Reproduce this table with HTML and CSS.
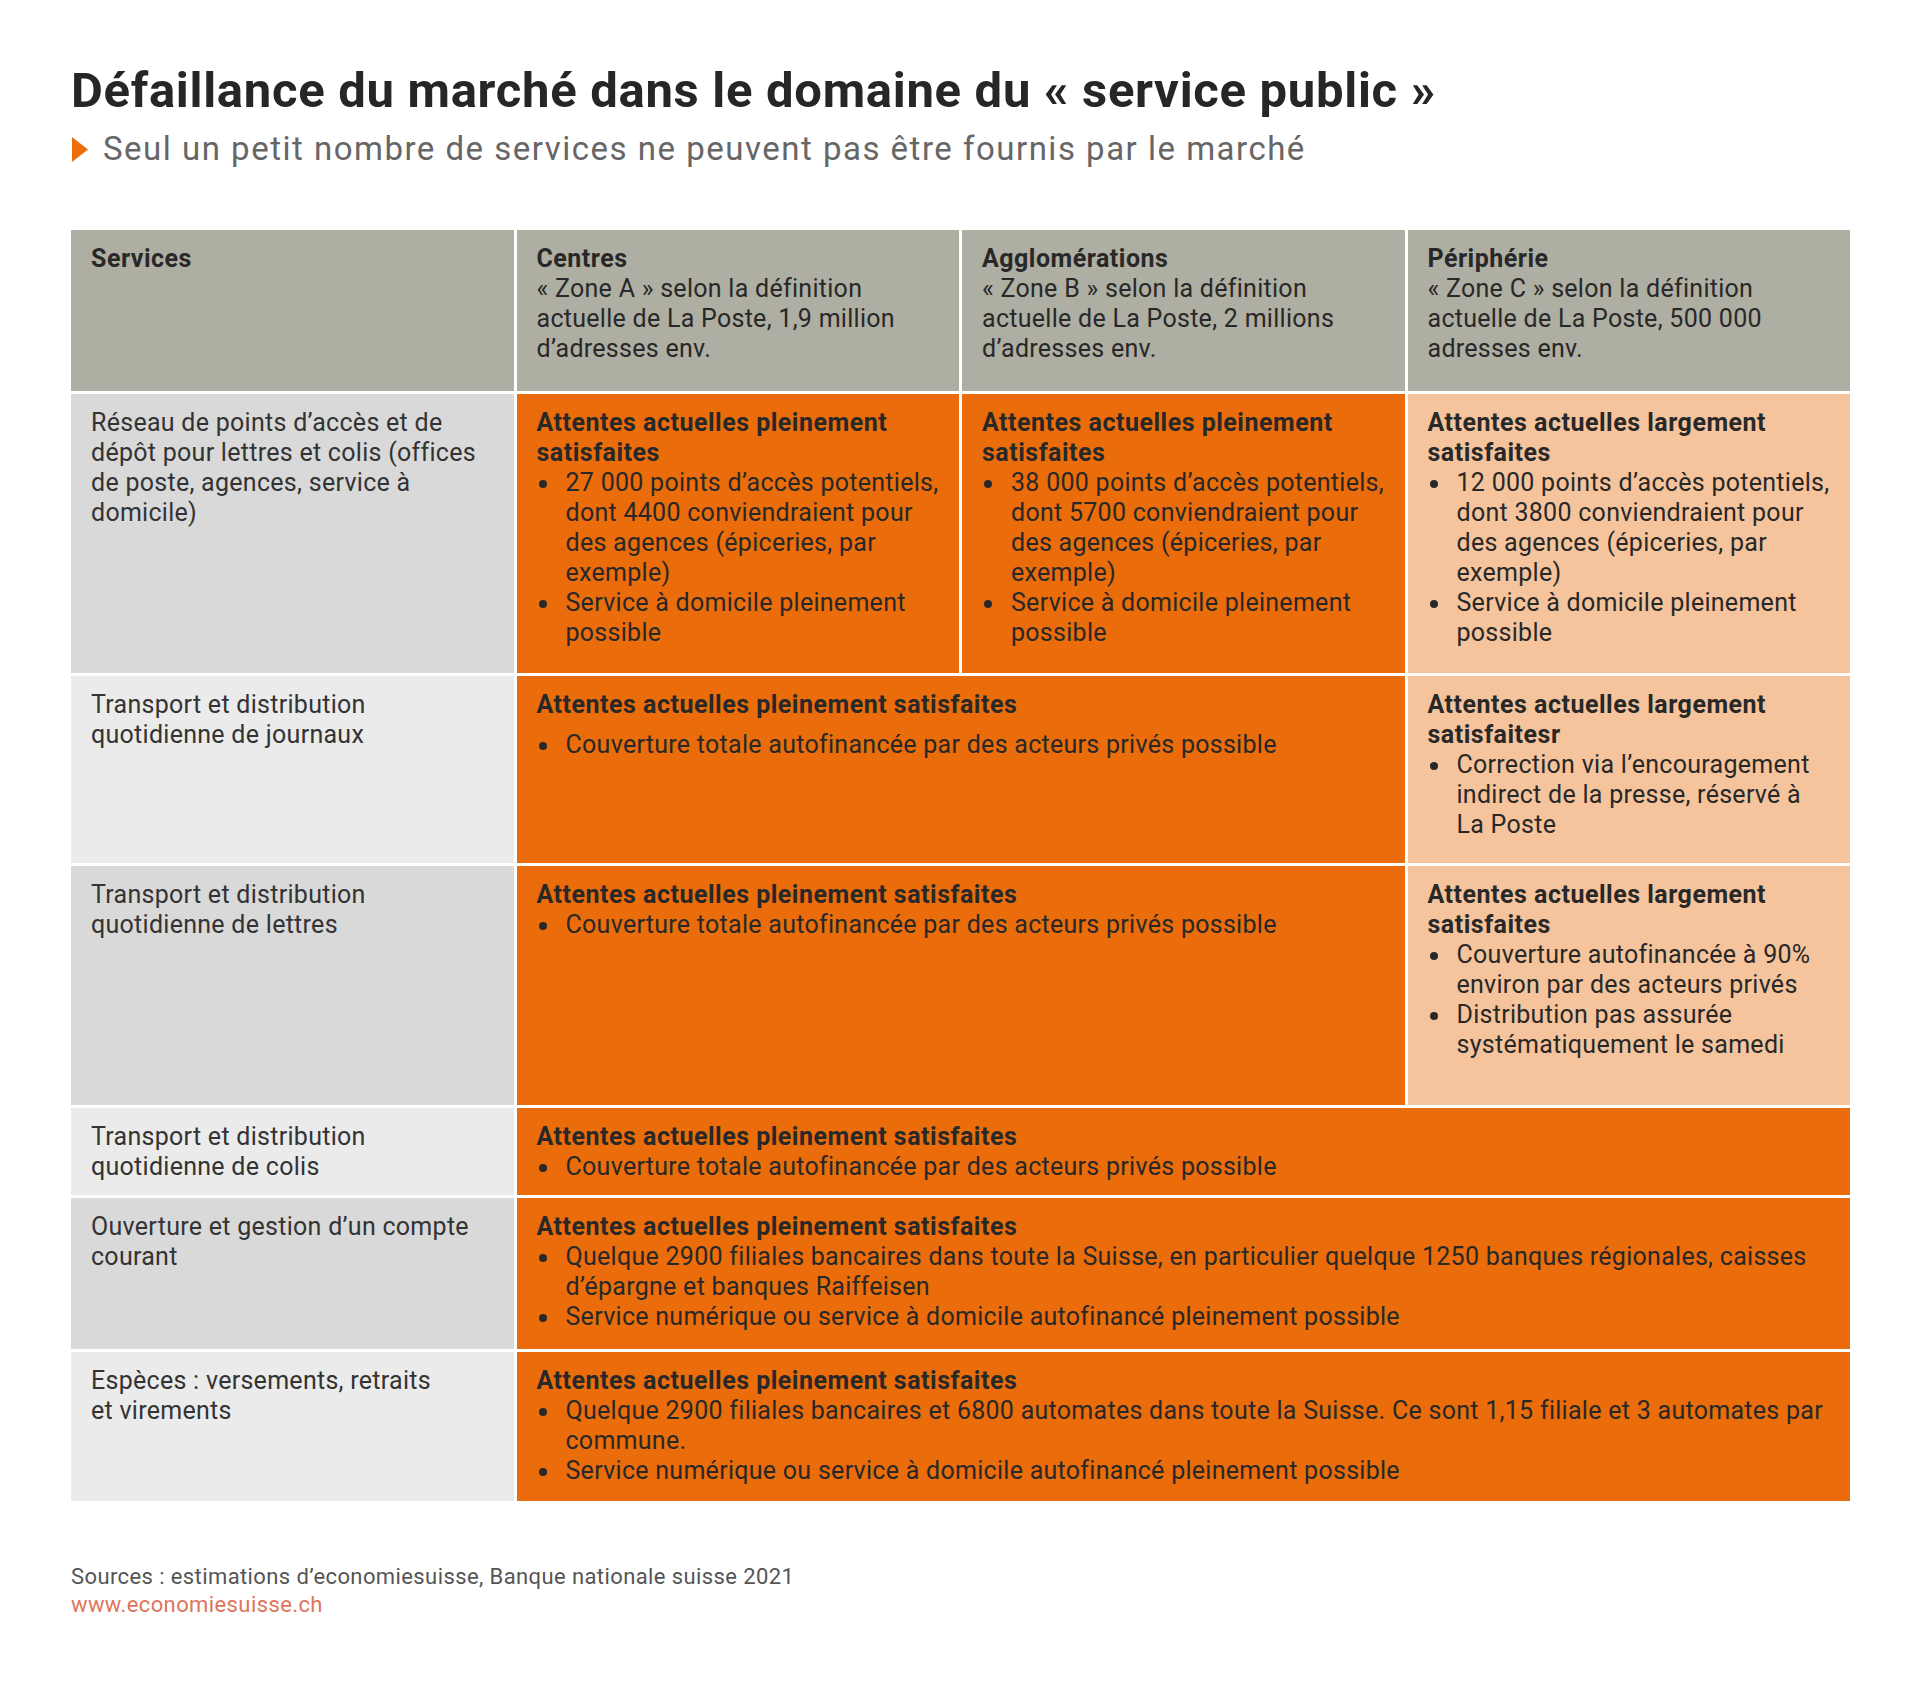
FILE: index.html
```html
<!DOCTYPE html>
<html lang="fr">
<head>
<meta charset="utf-8">
<title>Défaillance du marché dans le domaine du « service public »</title>
<link rel="stylesheet" href="styles.css">
</head>
<body>
<main class="page">
  <h1 class="title">Défaillance du marché dans le domaine du « service public »</h1>
  <p class="subtitle"><svg class="tri" width="16" height="25" viewBox="0 0 16 25"><polygon points="0,0 16,12.5 0,25" fill="#ec6d0b"/></svg><span>Seul un petit nombre de services ne peuvent pas être fournis par le marché</span></p>

  <section class="table">
    <div class="cell head"><b>Services</b></div>
    <div class="cell head"><b>Centres</b><br>« Zone A » selon la définition actuelle de La Poste, 1,9 million d’adresses env.</div>
    <div class="cell head"><b>Agglomérations</b><br>« Zone B » selon la définition actuelle de La Poste, 2 millions d’adresses env.</div>
    <div class="cell head"><b>Périphérie</b><br>« Zone C » selon la définition actuelle de La Poste, 500 000 adresses env.</div>

    <div class="cell svc dark">Réseau de points d’accès et de dépôt pour lettres et colis (offices de poste, agences, service à domicile)</div>
    <div class="cell full">
      <div class="lead">Attentes actuelles pleinement satisfaites</div>
      <ul><li>27 000 points d’accès potentiels, dont 4400 conviendraient pour des agences (épiceries, par exemple)</li><li>Service à domicile pleinement possible</li></ul>
    </div>
    <div class="cell full">
      <div class="lead">Attentes actuelles pleinement satisfaites</div>
      <ul><li>38 000 points d’accès potentiels, dont 5700 conviendraient pour des agences (épiceries, par exemple)</li><li>Service à domicile pleinement possible</li></ul>
    </div>
    <div class="cell part">
      <div class="lead">Attentes actuelles largement satisfaites</div>
      <ul><li>12 000 points d’accès potentiels, dont 3800 conviendraient pour des agences (épiceries, par exemple)</li><li>Service à domicile pleinement possible</li></ul>
    </div>

    <div class="cell svc light">Transport et distribution quotidienne de journaux</div>
    <div class="cell full span2">
      <div class="lead">Attentes actuelles pleinement satisfaites</div>
      <ul class="spaced"><li>Couverture totale autofinancée par des acteurs privés possible</li></ul>
    </div>
    <div class="cell part">
      <div class="lead">Attentes actuelles largement satisfaitesr</div>
      <ul><li>Correction via l’encouragement indirect de la presse, réservé à La Poste</li></ul>
    </div>

    <div class="cell svc dark">Transport et distribution quotidienne de lettres</div>
    <div class="cell full span2">
      <div class="lead">Attentes actuelles pleinement satisfaites</div>
      <ul><li>Couverture totale autofinancée par des acteurs privés possible</li></ul>
    </div>
    <div class="cell part">
      <div class="lead">Attentes actuelles largement satisfaites</div>
      <ul><li>Couverture autofinancée à 90% environ par des acteurs privés</li><li>Distribution pas assurée systématiquement le samedi</li></ul>
    </div>

    <div class="cell svc light">Transport et distribution quotidienne de colis</div>
    <div class="cell full span3">
      <div class="lead">Attentes actuelles pleinement satisfaites</div>
      <ul><li>Couverture totale autofinancée par des acteurs privés possible</li></ul>
    </div>

    <div class="cell svc dark">Ouverture et gestion d’un compte courant</div>
    <div class="cell full span3">
      <div class="lead">Attentes actuelles pleinement satisfaites</div>
      <ul><li>Quelque 2900 filiales bancaires dans toute la Suisse, en particulier quelque 1250 banques régionales, caisses d’épargne et banques Raiffeisen</li><li>Service numérique ou service à domicile autofinancé pleinement possible</li></ul>
    </div>

    <div class="cell svc light">Espèces : versements, retraits<br>et virements</div>
    <div class="cell full span3">
      <div class="lead">Attentes actuelles pleinement satisfaites</div>
      <ul><li>Quelque 2900 filiales bancaires et 6800 automates dans toute la Suisse. Ce sont 1,15 filiale et 3 automates par commune.</li><li>Service numérique ou service à domicile autofinancé pleinement possible</li></ul>
    </div>
  </section>

  <footer class="foot">
    <p>Sources : estimations d’economiesuisse, Banque nationale suisse 2021</p>
    <p class="link">www.economiesuisse.ch</p>
  </footer>
</main>
</body>
</html>
```

FILE: styles.css
```css
html, body {
  margin: 0;
  padding: 0;
  background: #ffffff;
}

body {
  font-family: Roboto, "Liberation Sans", sans-serif;
  color: #282828;
}

.page {
  padding: 61px 70px 40px 71px;
}

.title {
  margin: 0;
  font-size: 49px;
  line-height: 59px;
  font-weight: 700;
  color: #262626;
  letter-spacing: 0.7px;
}

.subtitle {
  margin: 9px 0 0 1px;
  display: flex;
  align-items: center;
  gap: 15px;
  font-size: 33px;
  line-height: 40px;
  color: #666666;
  letter-spacing: 1.5px;
}

.tri {
  flex: 0 0 auto;
  margin-top: 1px;
}

.table {
  margin-top: 61px;
  width: 1779px;
  display: grid;
  grid-template-columns: repeat(4, 1fr);
  grid-template-rows: 161px 279px 187px 239px 87px 151px 149px;
  gap: 3px;
  font-size: 25px;
  line-height: 30px;
  letter-spacing: 0.28px;
}

.cell {
  padding: 14px 16px 10px 20px;
  box-sizing: border-box;
}

.cell b,
.lead {
  font-weight: 700;
  letter-spacing: 0.5px;
}

.head {
  background: #aeaea2;
  color: #282828;
}

.svc {
  color: #333333;
}

.svc.dark {
  background: #d9d9d9;
}

.svc.light {
  background: #ebebeb;
}

.full {
  background: #ea6c0a;
}

.part {
  background: #f5c49c;
}

.span2 {
  grid-column: span 2;
}

.span3 {
  grid-column: span 3;
}

ul {
  list-style: none;
  margin: 0;
  padding: 0;
}

ul.spaced {
  margin-top: 10px;
}

li {
  display: flex;
}

li::before {
  content: "";
  flex: 0 0 auto;
  width: 8px;
  height: 8px;
  border-radius: 50%;
  background: #282828;
  margin: 12px 19px 0 2px;
}

.foot {
  margin-top: 62px;
  font-size: 22px;
  line-height: 28px;
  color: #555555;
  letter-spacing: 0.4px;
}

.foot p {
  margin: 0;
}

.foot .link {
  color: #e0745a;
}
```
